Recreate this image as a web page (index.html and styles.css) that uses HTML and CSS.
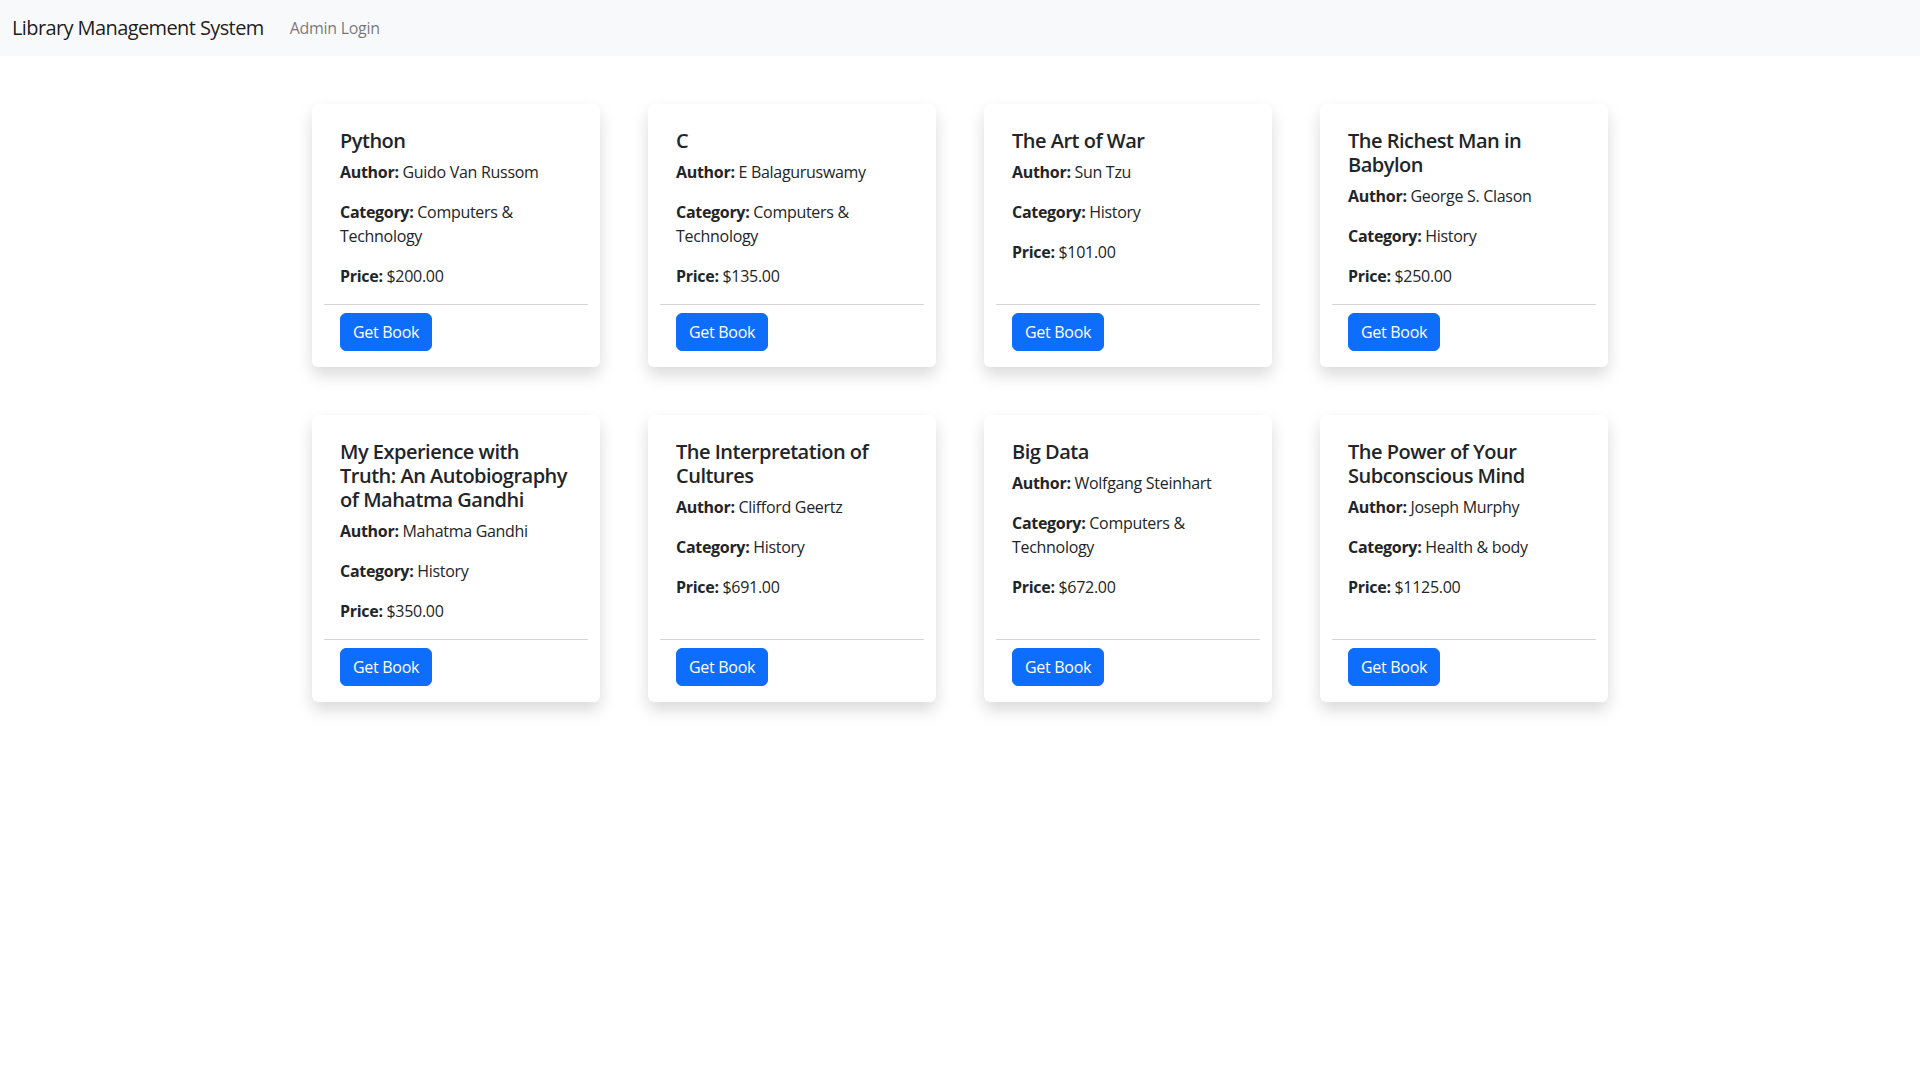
FILE: index.html
```html
<!DOCTYPE html>
<html lang="en">
<head>
<meta charset="utf-8">
<title>Library Management System</title>
<link rel="stylesheet" href="styles.css">
</head>
<body>
<nav class="navbar">
  <a class="brand" href="#">Library Management System</a>
  <a class="nav-link" href="#">Admin Login</a>
</nav>
<main class="container">
  <div class="book-grid">
    <div class="card">
      <div class="card-body">
        <h5 class="card-title">Python</h5>
        <p><strong>Author:</strong> Guido Van Russom</p>
        <p><strong>Category:</strong> Computers &amp; Technology</p>
        <p><strong>Price:</strong> $200.00</p>
      </div>
      <div class="card-footer"><button class="btn">Get Book</button></div>
    </div>
    <div class="card">
      <div class="card-body">
        <h5 class="card-title">C</h5>
        <p><strong>Author:</strong> E Balaguruswamy</p>
        <p><strong>Category:</strong> Computers &amp; Technology</p>
        <p><strong>Price:</strong> $135.00</p>
      </div>
      <div class="card-footer"><button class="btn">Get Book</button></div>
    </div>
    <div class="card">
      <div class="card-body">
        <h5 class="card-title">The Art of War</h5>
        <p><strong>Author:</strong> Sun Tzu</p>
        <p><strong>Category:</strong> History</p>
        <p><strong>Price:</strong> $101.00</p>
      </div>
      <div class="card-footer"><button class="btn">Get Book</button></div>
    </div>
    <div class="card">
      <div class="card-body">
        <h5 class="card-title">The Richest Man in Babylon</h5>
        <p><strong>Author:</strong> George S. Clason</p>
        <p><strong>Category:</strong> History</p>
        <p><strong>Price:</strong> $250.00</p>
      </div>
      <div class="card-footer"><button class="btn">Get Book</button></div>
    </div>
    <div class="card">
      <div class="card-body">
        <h5 class="card-title">My Experience with Truth: An Autobiography of Mahatma Gandhi</h5>
        <p><strong>Author:</strong> Mahatma Gandhi</p>
        <p><strong>Category:</strong> History</p>
        <p><strong>Price:</strong> $350.00</p>
      </div>
      <div class="card-footer"><button class="btn">Get Book</button></div>
    </div>
    <div class="card">
      <div class="card-body">
        <h5 class="card-title">The Interpretation of Cultures</h5>
        <p><strong>Author:</strong> Clifford Geertz</p>
        <p><strong>Category:</strong> History</p>
        <p><strong>Price:</strong> $691.00</p>
      </div>
      <div class="card-footer"><button class="btn">Get Book</button></div>
    </div>
    <div class="card">
      <div class="card-body">
        <h5 class="card-title">Big Data</h5>
        <p><strong>Author:</strong> Wolfgang Steinhart</p>
        <p><strong>Category:</strong> Computers &amp; Technology</p>
        <p><strong>Price:</strong> $672.00</p>
      </div>
      <div class="card-footer"><button class="btn">Get Book</button></div>
    </div>
    <div class="card">
      <div class="card-body">
        <h5 class="card-title">The Power of Your Subconscious Mind</h5>
        <p><strong>Author:</strong> Joseph Murphy</p>
        <p><strong>Category:</strong> Health &amp; body</p>
        <p><strong>Price:</strong> $1125.00</p>
      </div>
      <div class="card-footer"><button class="btn">Get Book</button></div>
    </div>
  </div>
</main>
</body>
</html>
```
FILE: styles.css
```css
* {
  box-sizing: border-box;
}

body {
  margin: 0;
  font-family: "Open Sans", "Noto Sans", sans-serif;
  font-size: 16px;
  line-height: 1.5;
  color: #212529;
  background: #fff;
}

.navbar {
  display: flex;
  align-items: center;
  height: 56px;
  padding: 8px 12px;
  background: #f8f9fa;
}

.brand {
  font-size: 20px;
  line-height: 30px;
  color: rgba(0, 0, 0, 0.9);
  text-decoration: none;
  margin-right: 18px;
  letter-spacing: -0.6px;
}

.nav-link {
  padding: 8px;
  color: rgba(0, 0, 0, 0.55);
  text-decoration: none;
  letter-spacing: -0.3px;
}

.container {
  width: 1296px;
  margin: 48px auto;
}

.book-grid {
  display: grid;
  grid-template-columns: repeat(4, 288px);
  column-gap: 48px;
  row-gap: 48px;
}

.card {
  display: flex;
  flex-direction: column;
  padding: 8px 12px;
  background: #fff;
  border-radius: 6px;
  box-shadow: 0 8px 16px rgba(0, 0, 0, 0.15);
}

.card-body {
  flex: 1;
  padding: 16px 16px 0;
  letter-spacing: -0.3px;
}

.card-title {
  margin: 0 0 7px;
  padding-top: 1px;
  font-size: 20px;
  font-weight: 600;
  line-height: 24px;
  letter-spacing: -0.5px;
}

.card-body p {
  margin: 0 0 16px;
}

.card-body strong {
  font-weight: 700;
}

.card-footer {
  padding: 8px 16px;
  border-top: 1px solid #d3d4d5;
}

.btn {
  display: inline-block;
  height: 38px;
  padding: 6px 12px;
  font-family: inherit;
  font-size: 16px;
  line-height: 24px;
  color: #fff;
  background: #0d6efd;
  border: 1px solid #0d6efd;
  border-radius: 6px;
  cursor: pointer;
  letter-spacing: -0.3px;
}
```
